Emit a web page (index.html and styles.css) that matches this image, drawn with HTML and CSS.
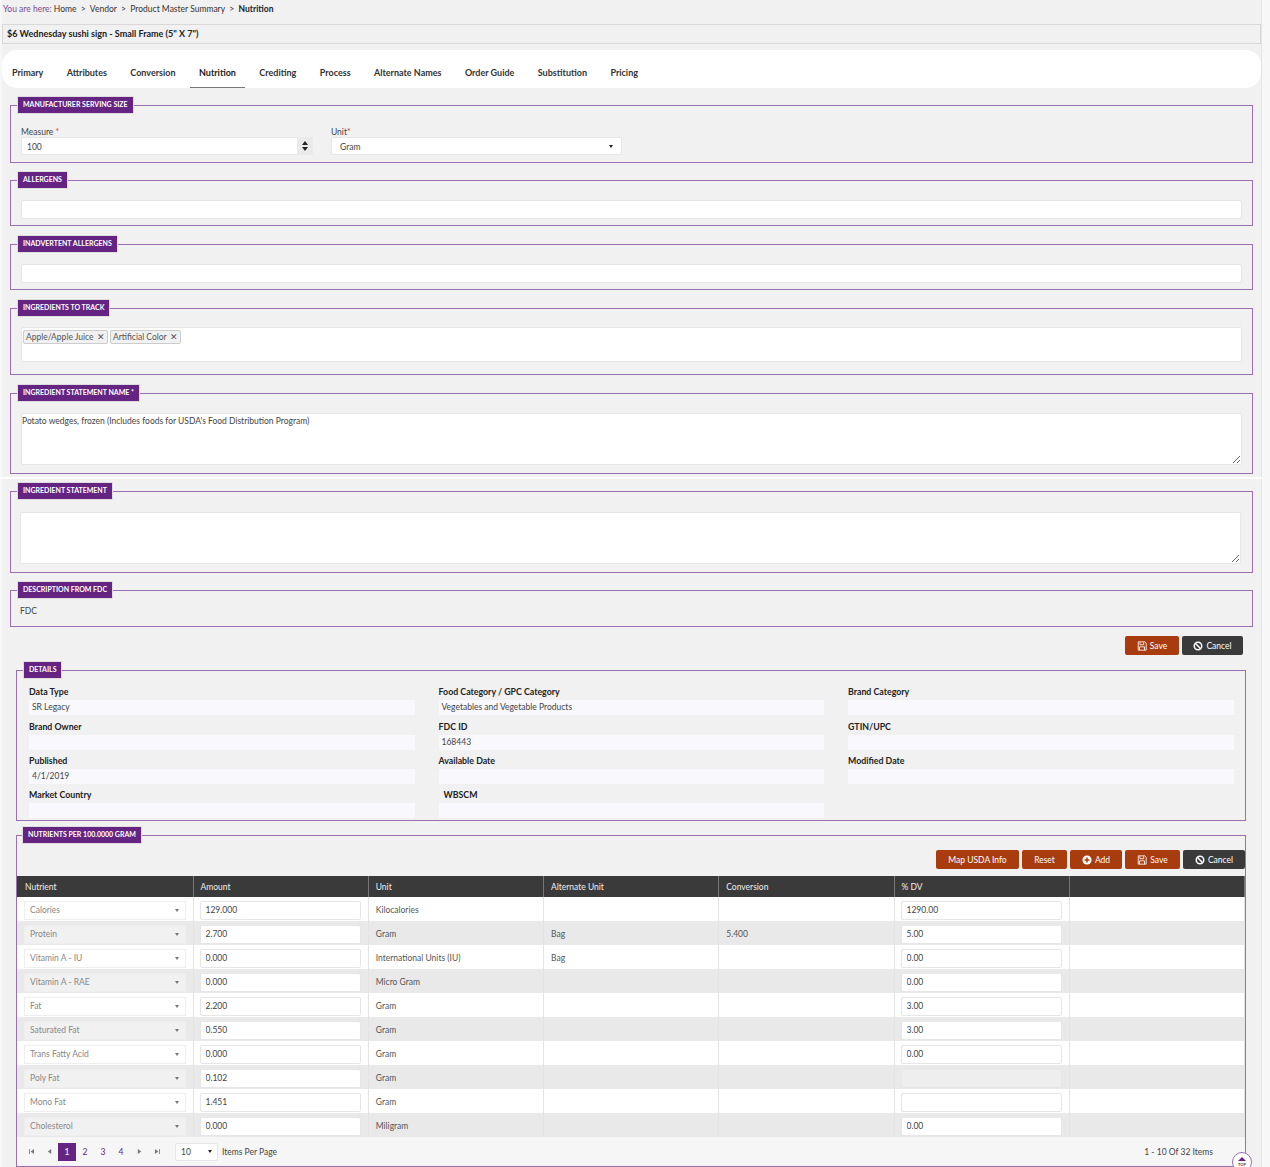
FILE: index.html
```html
<!DOCTYPE html>
<html lang="en">
<head>
    <meta charset="UTF-8">
    <title>Nutrition</title>
    <link rel="stylesheet" href="styles.css">
</head>
<body>
    <svg class="icon-defs" width="0" height="0">
        <symbol id="i-save" viewBox="0 0 12 12">
            <path d="M1.5 1h8l1.500 1.500v8.500h-9.500z M3.500 1.500v3h4.500v-3 M3 11v-4h6v4" fill="none" stroke="currentColor" stroke-width="1"/>
        </symbol>
        <symbol id="i-ban" viewBox="0 0 12 12">
            <circle cx="6" cy="6" r="4.500" fill="none" stroke="currentColor" stroke-width="1.800"/>
            <path d="M3 3l6 6" stroke="currentColor" stroke-width="1.800"/>
        </symbol>
        <symbol id="i-add" viewBox="0 0 12 12">
            <circle cx="6" cy="6" r="5.500" fill="currentColor"/>
            <path d="M3 6h6M6 3v6" stroke="#a93c0e" stroke-width="1.800"/>
        </symbol>
    </svg>

    <div class="page">
        <div class="breadcrumb">
            <span class="here">You are here:</span> Home &nbsp;&gt;&nbsp; Vendor &nbsp;&gt;&nbsp; Product Master Summary &nbsp;&gt;&nbsp; <b>Nutrition</b>
        </div>
        <div class="title-bar">$6 Wednesday sushi sign - Small Frame (5" X 7")</div>

        <ul class="tabs">
            <li>Primary</li>
            <li>Attributes</li>
            <li>Conversion</li>
            <li class="active">Nutrition</li>
            <li>Crediting</li>
            <li>Process</li>
            <li>Alternate Names</li>
            <li>Order Guide</li>
            <li>Substitution</li>
            <li>Pricing</li>
        </ul>

        <fieldset class="box box-serving">
            <legend>Manufacturer Serving Size</legend>
            <div class="serving-row">
                <div class="measure">
                    <label>Measure <span class="req">*</span></label>
                    <div class="spin-field">
                        <input class="field" type="text" value="100">
                        <span class="spin"><i class="up"></i><i class="down"></i></span>
                    </div>
                </div>
                <div class="unit">
                    <label>Unit<span class="req">*</span></label>
                    <div class="select-field"><span>Gram</span><i class="caret"></i></div>
                </div>
            </div>
        </fieldset>

        <fieldset class="box box-single box-allergens">
            <legend>Allergens</legend>
            <input class="field wide" type="text">
        </fieldset>

        <fieldset class="box box-single">
            <legend>Inadvertent Allergens</legend>
            <input class="field wide" type="text">
        </fieldset>

        <fieldset class="box box-track">
            <legend>Ingredients To Track</legend>
            <div class="tag-input">
                <span class="tag">Apple/Apple Juice <em>&#10005;</em></span>
                <span class="tag">Artificial Color <em>&#10005;</em></span>
            </div>
        </fieldset>

        <fieldset class="box box-text">
            <legend>Ingredient Statement Name *</legend>
            <textarea class="area">Potato wedges, frozen (Includes foods for USDA's Food Distribution Program)</textarea>
        </fieldset>

        <div class="divider"></div>

        <fieldset class="box box-text box-statement">
            <legend>Ingredient Statement</legend>
            <textarea class="area"></textarea>
        </fieldset>

        <fieldset class="box box-fdc">
            <legend>Description From FDC</legend>
            <p>FDC</p>
        </fieldset>

        <div class="actions actions-top">
            <button class="btn orange"><svg><use href="#i-save"/></svg>Save</button>
            <button class="btn dark"><svg><use href="#i-ban"/></svg>Cancel</button>
        </div>

        <fieldset class="box box-details">
            <legend>Details</legend>
            <div class="details-grid">
                <div><label>Data Type</label><div class="readonly">SR Legacy</div></div>
                <div><label>Food Category / GPC Category</label><div class="readonly">Vegetables and Vegetable Products</div></div>
                <div><label>Brand Category</label><div class="readonly"></div></div>
                <div><label>Brand Owner</label><div class="readonly"></div></div>
                <div><label>FDC ID</label><div class="readonly">168443</div></div>
                <div><label>GTIN/UPC</label><div class="readonly"></div></div>
                <div><label>Published</label><div class="readonly">4/1/2019</div></div>
                <div><label>Available Date</label><div class="readonly"></div></div>
                <div><label>Modified Date</label><div class="readonly"></div></div>
                <div><label>Market Country</label><div class="readonly"></div></div>
                <div><label class="indent">WBSCM</label><div class="readonly"></div></div>
            </div>
        </fieldset>

        <fieldset class="box box-nutrients">
            <legend>Nutrients Per 100.0000 Gram</legend>
            <div class="actions actions-table">
                <button class="btn orange map">Map USDA Info</button>
                <button class="btn orange reset">Reset</button>
                <button class="btn orange add"><svg><use href="#i-add"/></svg>Add</button>
                <button class="btn orange save"><svg><use href="#i-save"/></svg>Save</button>
                <button class="btn dark"><svg><use href="#i-ban"/></svg>Cancel</button>
            </div>
            <table class="grid">
                <thead>
                    <tr>
                        <th>Nutrient</th>
                        <th>Amount</th>
                        <th>Unit</th>
                        <th>Alternate Unit</th>
                        <th>Conversion</th>
                        <th>% DV</th>
                        <th></th>
                    </tr>
                </thead>
                <tbody>
                    <tr>
                        <td><div class="cell-select">Calories<i class="caret"></i></div></td>
                        <td><input class="field" type="text" value="129.000"></td>
                        <td>Kilocalories</td><td></td><td></td>
                        <td><input class="field" type="text" value="1290.00"></td><td></td>
                    </tr>
                    <tr>
                        <td><div class="cell-select">Protein<i class="caret"></i></div></td>
                        <td><input class="field" type="text" value="2.700"></td>
                        <td>Gram</td><td>Bag</td><td>5.400</td>
                        <td><input class="field" type="text" value="5.00"></td><td></td>
                    </tr>
                    <tr>
                        <td><div class="cell-select">Vitamin A - IU<i class="caret"></i></div></td>
                        <td><input class="field" type="text" value="0.000"></td>
                        <td>International Units (IU)</td><td>Bag</td><td></td>
                        <td><input class="field" type="text" value="0.00"></td><td></td>
                    </tr>
                    <tr>
                        <td><div class="cell-select">Vitamin A - RAE<i class="caret"></i></div></td>
                        <td><input class="field" type="text" value="0.000"></td>
                        <td>Micro Gram</td><td></td><td></td>
                        <td><input class="field" type="text" value="0.00"></td><td></td>
                    </tr>
                    <tr>
                        <td><div class="cell-select">Fat<i class="caret"></i></div></td>
                        <td><input class="field" type="text" value="2.200"></td>
                        <td>Gram</td><td></td><td></td>
                        <td><input class="field" type="text" value="3.00"></td><td></td>
                    </tr>
                    <tr>
                        <td><div class="cell-select">Saturated Fat<i class="caret"></i></div></td>
                        <td><input class="field" type="text" value="0.550"></td>
                        <td>Gram</td><td></td><td></td>
                        <td><input class="field" type="text" value="3.00"></td><td></td>
                    </tr>
                    <tr>
                        <td><div class="cell-select">Trans Fatty Acid<i class="caret"></i></div></td>
                        <td><input class="field" type="text" value="0.000"></td>
                        <td>Gram</td><td></td><td></td>
                        <td><input class="field" type="text" value="0.00"></td><td></td>
                    </tr>
                    <tr>
                        <td><div class="cell-select">Poly Fat<i class="caret"></i></div></td>
                        <td><input class="field" type="text" value="0.102"></td>
                        <td>Gram</td><td></td><td></td>
                        <td><input class="field disabled" type="text"></td><td></td>
                    </tr>
                    <tr>
                        <td><div class="cell-select">Mono Fat<i class="caret"></i></div></td>
                        <td><input class="field" type="text" value="1.451"></td>
                        <td>Gram</td><td></td><td></td>
                        <td><input class="field" type="text"></td><td></td>
                    </tr>
                    <tr>
                        <td><div class="cell-select">Cholesterol<i class="caret"></i></div></td>
                        <td><input class="field" type="text" value="0.000"></td>
                        <td>Miligram</td><td></td><td></td>
                        <td><input class="field" type="text" value="0.00"></td><td></td>
                    </tr>
                </tbody>
            </table>
            <div class="pager">
                <div class="pages">
                    <span class="nav"><svg width="5" height="5" viewBox="0 0 6 6"><path d="M0 0h1v6H0zM6 0v6L2 3z"/></svg></span>
                    <span class="nav"><svg width="5" height="5" viewBox="0 0 6 6"><path d="M5 0v6L1 3z"/></svg></span>
                    <span class="page-no current">1</span>
                    <span class="page-no">2</span>
                    <span class="page-no">3</span>
                    <span class="page-no">4</span>
                    <span class="nav"><svg width="5" height="5" viewBox="0 0 6 6"><path d="M1 0v6l4-3z"/></svg></span>
                    <span class="nav"><svg width="5" height="5" viewBox="0 0 6 6"><path d="M0 0v6l4-3zM5 0h1v6H5z"/></svg></span>
                </div>
                <div class="per-page"><span>10</span><i class="caret"></i></div>
                <span class="per-label">Items Per Page</span>
                <span class="count">1 - 10 Of 32 Items</span>
            </div>
        </fieldset>
        <div class="to-top"><i></i>TOP</div>
    </div>
</body>
</html>
```

FILE: styles.css
```css
* {
    box-sizing: border-box;
}

html, body {
    height: 1167px;
    overflow: hidden;
}

body {
    margin: 0;
    background: #f7f7f7;
    color: #444;
    font-family: Lato, "Open Sans", Arial, sans-serif;
    font-size: 8.500px;
}

.icon-defs {
    position: absolute;
}

.page {
    position: relative;
    margin-left: 2px;
    width: 1260px;
    height: 1167px;
    background: #f1f1f1;
    border-right: 1px solid #e4e4e4;
}

.breadcrumb {
    height: 24px;
    padding: 3px 0 0 1px;
    line-height: 13px;
    color: #333;
}

.breadcrumb .here {
    color: #7a4a90;
}

.breadcrumb b {
    color: #222;
}

.title-bar {
    height: 20px;
    padding-left: 4px;
    line-height: 17px;
    font-size: 9px;
    font-weight: 700;
    color: #222;
    border: 1px solid #d8d8d8;
}

.tabs {
    display: flex;
    list-style: none;
    margin: 6px 0 0;
    padding: 0;
    height: 38px;
    background: #fff;
    border-radius: 15px;
    font-size: 9px;
    font-weight: 700;
    color: #333;
}

.tabs li {
    padding: 16px 9px 0;
    margin-right: 5.400px;
    line-height: 13px;
    border-bottom: 1px solid transparent;
}

.tabs li:first-child {
    margin-left: 1px;
}

.tabs li.active {
    border-bottom-color: #777;
    color: #222;
}

/* purple framed sections */
.box {
    margin: 10px 8px 0 8px;
    padding: 0 10px;
    min-width: 0;
    border: 1px solid #9a70b2;
}

.box legend {
    margin-left: -3px;
    padding: 0 5px;
    height: 16px;
    line-height: 15px;
    background: #662482;
    color: #fff;
    font-size: 7px;
    font-weight: 700;
    text-transform: uppercase;
    outline: 1px solid #ddd;
}

.box-serving {
    height: 66px;
    margin-top: 9px;
}

.serving-row {
    display: flex;
    padding-top: 13px;
}

.serving-row label {
    display: block;
    height: 11px;
    line-height: 13px;
}

.req {
    color: #d33;
}

.measure {
    width: 292px;
}

.unit {
    width: 291px;
    margin-left: 18px;
}

.spin-field {
    position: relative;
}

.spin-field .field {
    width: 100%;
}

.spin {
    position: absolute;
    top: 0;
    right: 0;
    width: 16px;
    height: 18px;
    background: #eaeaea;
}

.spin i {
    position: absolute;
    left: 5px;
    border-left: 3px solid transparent;
    border-right: 3px solid transparent;
}

.spin .up {
    top: 4px;
    border-bottom: 4px solid #222;
}

.spin .down {
    top: 10px;
    border-top: 4px solid #222;
}

.field {
    height: 18px;
    padding: 1px 5px 0;
    background: #fff;
    border: 1px solid #e6e6e6;
    border-radius: 2px;
    color: #444;
    font-family: inherit;
    font-size: 8.500px;
    outline: none;
}

.field.wide {
    display: block;
    width: 100%;
}

.field.disabled {
    background: #eee;
}

.select-field {
    display: flex;
    align-items: center;
    justify-content: space-between;
    height: 18px;
    padding: 1px 8px 0;
    background: #fff;
    border: 1px solid #e6e6e6;
    border-radius: 2px;
}

.caret {
    display: block;
    border-left: 2.500px solid transparent;
    border-right: 2.500px solid transparent;
    border-top: 3px solid #222;
}

.box-single {
    height: 54px;
    margin-top: 10px;
}

.box-allergens {
    margin-top: 9px;
}

.box-single .field {
    margin-top: 12px;
    height: 19px;
}

.box-track {
    height: 75px;
    margin-top: 10px;
}

.tag-input {
    margin-top: 11px;
    height: 35px;
    padding: 2px 1px;
    background: #fff;
    border: 1px solid #e6e6e6;
    border-radius: 2px;
}

.tag {
    display: inline-block;
    height: 14px;
    padding: 0 2px;
    line-height: 12px;
    background: #f1f1f1;
    border: 1px solid #ccc;
    border-radius: 2px;
    color: #555;
}

.tag em {
    font-style: normal;
    font-size: 9px;
    margin-left: 1px;
}

.box-text {
    height: 89px;
    margin-top: 10px;
}

.area {
    display: block;
    width: 100%;
    margin-top: 12px;
    height: 52px;
    padding: 2px 0;
    background: #fff;
    border: 1px solid #e6e6e6;
    border-radius: 2px;
    color: #444;
    font-family: inherit;
    font-size: 8.500px;
    outline: none;
}

.divider {
    height: 2px;
    margin: 3px -2px 0;
    background: #fff;
}

.box-statement {
    height: 90px;
    margin-top: 4px;
}

.box-statement .area {
    margin-top: 13px;
    margin-left: -1px;
}

.box-fdc {
    height: 45px;
    margin-top: 9px;
}

.box-fdc p {
    margin: 7px 0 0 -1px;
    line-height: 13px;
}

.actions {
    display: flex;
    justify-content: flex-end;
    gap: 3px;
}

.actions-top {
    margin: 9px 18px 0 0;
}

.btn {
    display: inline-flex;
    align-items: center;
    justify-content: center;
    gap: 3px;
    height: 19px;
    width: 54px;
    padding: 0;
    border: none;
    border-radius: 2px;
    color: #fff;
    font-family: inherit;
    font-size: 8.500px;
    cursor: pointer;
}

.actions .dark {
    width: 61px;
}

.btn svg {
    width: 10px;
    height: 10px;
}

.orange {
    background: #a93c0e;
}

.dark {
    background: #3a3a3a;
}

.box-details {
    height: 159px;
    margin: 7px 15px 0 14px;
}

.details-grid {
    display: grid;
    grid-template-columns: 385.500px 385.500px 385.500px;
    column-gap: 24px;
    padding-top: 7px;
    margin-left: 2px;
}

.details-grid label {
    display: block;
    height: 15px;
    line-height: 14px;
    color: #222;
    font-size: 8.800px;
    font-weight: 700;
}

.details-grid .indent {
    padding-left: 5px;
}

.details-grid > div:nth-child(-n+3) .readonly {
    margin-bottom: 5px;
}

.readonly {
    height: 15px;
    margin-bottom: 4px;
    padding-left: 3px;
    line-height: 14px;
    background: #f8f8fd;
    color: #444;
}

.box-nutrients {
    height: 340px;
    margin: 6px 15px 0 14px;
    padding: 0;
}

.box-nutrients legend {
    margin-left: 6px;
}

.actions-table {
    margin-top: 7px;
    height: 19px;
}

.actions-table .map {
    width: 83px;
}

.actions-table .reset {
    width: 45px;
}

.actions-table .add {
    width: 52px;
}

.actions-table .save {
    width: 55px;
}

.actions-table .dark {
    width: 62px;
}

.grid {
    margin-top: 7px;
    width: 100%;
    table-layout: fixed;
    border-collapse: collapse;
    background: #fff;
}

.grid th {
    height: 21px;
    padding: 0 7px;
    background: #3a3a3a;
    color: #eee;
    font-weight: 400;
    text-align: left;
    border-right: 1px solid #777;
}

.grid th:first-child {
    width: 176px;
    padding-left: 8px;
}

.grid td {
    height: 24px;
    padding: 2px 7px 0;
    border-right: 1px solid #e4e4e4;
    color: #555;
}

.grid tbody tr:nth-child(even) td {
    background: #e9e9e9;
}

.grid td .field {
    display: block;
    width: 161px;
    height: 19px;
    margin-left: -1px;
    padding-top: 0;
}

.cell-select {
    display: flex;
    align-items: center;
    justify-content: space-between;
    width: 162px;
    height: 19px;
    padding: 0 6px 0 5px;
    background: #fff;
    border: 1px solid #eee;
    color: #888;
}

.grid tbody tr:nth-child(even) .cell-select {
    background: #f1f1f1;
}

.cell-select .caret {
    border-top-color: #777;
}

.pager {
    display: flex;
    align-items: center;
    height: 28px;
    padding: 1px 0 0 5px;
    background: #f6f6f6;
}

.pages {
    display: flex;
    align-items: center;
}

.nav {
    display: flex;
    align-items: center;
    justify-content: center;
    width: 18px;
    height: 18px;
    fill: #777;
}

.page-no {
    width: 18px;
    height: 18px;
    line-height: 18px;
    text-align: center;
    color: #662482;
}

.page-no.current {
    background: #662482;
    color: #fff;
}

.per-page {
    display: flex;
    align-items: center;
    justify-content: space-between;
    width: 43px;
    height: 18px;
    margin-left: 9px;
    padding: 0 5px;
    background: #fff;
    border: 1px solid #e6e6e6;
    border-radius: 2px;
}

.per-label {
    margin-left: 4px;
}

.count {
    margin-left: auto;
    margin-right: 32px;
}

.to-top {
    position: absolute;
    left: 1230px;
    top: 1152px;
    width: 20px;
    height: 20px;
    padding-top: 9px;
    background: #fff;
    border: 1px solid #9a70b2;
    border-radius: 50%;
    color: #444;
    font-size: 4px;
    font-weight: 700;
    line-height: 5px;
    text-align: center;
}

.to-top i {
    position: absolute;
    left: 5px;
    top: 4px;
    border-left: 4px solid transparent;
    border-right: 4px solid transparent;
    border-bottom: 4px solid #662482;
}
```
